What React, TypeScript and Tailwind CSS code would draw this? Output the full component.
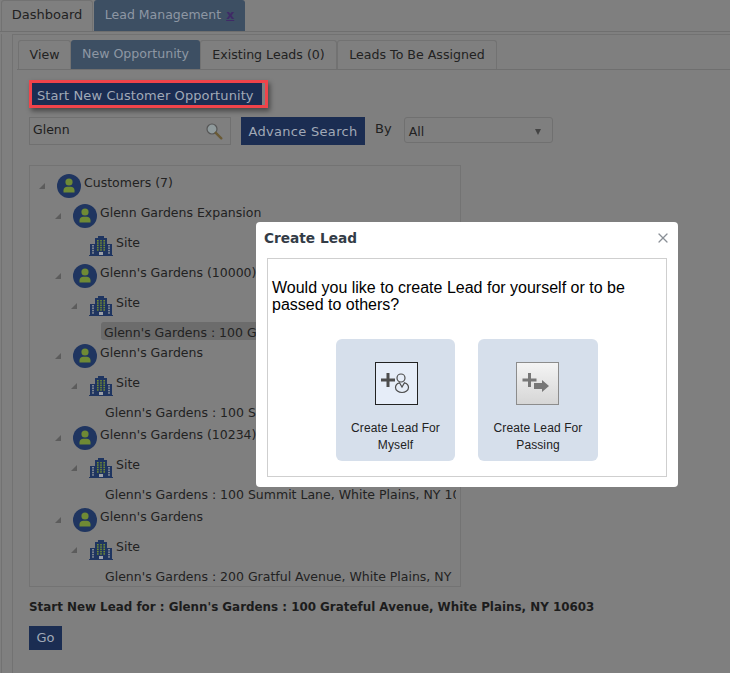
import { X } from "lucide-react";

type TreeRow = {
  level: number;
  kind: "person" | "site" | "address";
  label: string;
  arrow?: boolean;
  selected?: boolean;
  height?: string;
};

const treeRows: TreeRow[] = [
  { level: 0, kind: "person", label: "Customers (7)", arrow: true },
  { level: 1, kind: "person", label: "Glenn Gardens Expansion", arrow: true },
  { level: 2, kind: "site", label: "Site" },
  { level: 1, kind: "person", label: "Glenn's Gardens (10000)", arrow: true },
  { level: 2, kind: "site", label: "Site", arrow: true },
  { level: 3, kind: "address", label: "Glenn's Gardens : 100 Grateful Avenue, White Plains, NY 10603", selected: true, height: "h-[20px]" },
  { level: 1, kind: "person", label: "Glenn's Gardens", arrow: true },
  { level: 2, kind: "site", label: "Site", arrow: true },
  { level: 3, kind: "address", label: "Glenn's Gardens : 100 Summit Lane, White Plains, NY 10603", height: "h-[22px]" },
  { level: 1, kind: "person", label: "Glenn's Gardens (10234)", arrow: true },
  { level: 2, kind: "site", label: "Site", arrow: true },
  { level: 3, kind: "address", label: "Glenn's Gardens : 100 Summit Lane, White Plains, NY 10603", height: "h-[22px]" },
  { level: 1, kind: "person", label: "Glenn's Gardens", arrow: true },
  { level: 2, kind: "site", label: "Site", arrow: true },
  { level: 3, kind: "address", label: "Glenn's Gardens : 200 Gratful Avenue, White Plains, NY 10603", height: "h-[22px]" },
];

function PersonIcon() {
  return (
    <svg width="24" height="24" viewBox="0 0 24 24" className="shrink-0">
      <circle cx="12" cy="12" r="12" fill="#1f3560" />
      <circle cx="12" cy="8" r="3.6" fill="#6f8a35" />
      <path d="M6.500 18.500v-2.200c0-2.200 1.700-3.600 3.600-3.600h3.800c1.900 0 3.600 1.400 3.600 3.600v2.200z" fill="#6f8a35" />
    </svg>
  );
}

function SiteIcon() {
  const side = [0, 1, 2, 3];
  return (
    <svg width="24" height="20" viewBox="0 0 24 20" className="shrink-0">
      <path d="M0 20v-1h1V8h5V2h3V0h6v2h3v6h5v11h1v1z" fill="#1f3560" />
      {side.map((i) => (
        <g key={i} fill="#7d8590">
          <rect x="3" y={9 + i * 2.4} width="2" height="1.5" />
          <rect x="19" y={9 + i * 2.4} width="2" height="1.5" />
        </g>
      ))}
      {[0, 1, 2, 3, 4].map((i) => (
        <g key={i} fill="#6f8a35">
          <rect x="8" y={4 + i * 2.3} width="1.6" height="1.5" />
          <rect x="11.2" y={4 + i * 2.3} width="1.6" height="1.5" />
          <rect x="14.4" y={4 + i * 2.3} width="1.6" height="1.5" />
        </g>
      ))}
      <rect x="10" y="16" width="4" height="3" fill="#9a9ea6" />
    </svg>
  );
}

function TreeArrow() {
  return (
    <svg width="6" height="6" viewBox="0 0 6 6" className="absolute top-[15px] -left-[18px]">
      <path d="M6 0v6H0z" fill="#5c5c5c" />
    </svg>
  );
}

function TreeLine({ row }: { row: TreeRow }) {
  if (row.kind === "address") {
    return (
      <div className={`${row.height} flex items-start pl-[71px]`}>
        <span
          className={`mt-[4px] h-[18px] whitespace-nowrap rounded-[3px] pr-[3px] leading-[21px] ${
            row.selected ? "bg-[#6c6c6c] pl-[3px]" : "pl-[4px]"
          }`}
        >
          {row.label}
        </span>
      </div>
    );
  }
  const indent = row.level === 0 ? "pl-[27px]" : row.level === 1 ? "pl-[43px]" : "pl-[59px]";
  return (
    <div className={`flex h-[30px] items-start ${indent}`}>
      <div className={`relative flex items-start gap-[3px] ${row.kind === "site" ? "pt-[8px]" : "pt-[6px]"}`}>
        {row.arrow && <TreeArrow />}
        {row.kind === "person" ? <PersonIcon /> : <SiteIcon />}
        <span className={`whitespace-nowrap leading-[17px] ${row.kind === "site" ? "-mt-[2px]" : ""}`}>{row.label}</span>
      </div>
    </div>
  );
}

function MyselfIcon() {
  return (
    <div className="ml-[2px] h-[43px] w-[43px] border border-[#222] bg-[#e6edf8]">
      <svg width="41" height="41" viewBox="0 0 41 41" fill="none">
        <path d="M5 17h14M12 10v14" stroke="#4d4d4d" strokeWidth="3" />
        <circle cx="25" cy="15" r="4" stroke="#4d4d4d" strokeWidth="1.200" />
        <path d="M23.500 19.800c-2.800.7-4 2.700-4 4.700 0 2.800 3 5 6.500 5s6.500-2.200 6.500-5c0-2-1.200-4-4-4.700L26 24z" stroke="#4d4d4d" strokeWidth="1.200" />
      </svg>
    </div>
  );
}

function PassingIcon() {
  return (
    <div className="mr-[2px] h-[43px] w-[43px] border border-[#8c8c8c] bg-gradient-to-b from-[#f4f4f4] to-[#d6d6d6]">
      <svg width="41" height="41" viewBox="0 0 41 41" fill="none">
        <path d="M5.500 17h14M12.500 10v14" stroke="#777" strokeWidth="3" />
        <path d="M17 20h8v-3l7 6-7 6v-3h-8z" fill="#777" />
      </svg>
    </div>
  );
}

function SearchIcon() {
  return (
    <svg width="18" height="18" viewBox="0 0 18 18" fill="none">
      <circle cx="7" cy="7" r="5" fill="#8f9a9c" stroke="#565656" strokeWidth="1.200" />
      <path d="M10.800 10.800l5.500 5.500" stroke="#6a5a35" strokeWidth="2.400" strokeLinecap="round" />
    </svg>
  );
}

export default function App() {
  return (
    <div className="relative h-[673px] w-[730px] overflow-hidden bg-[#7f7f7f] font-['DejaVu_Sans',sans-serif] text-[12.5px] text-[#222]">
      {/* Top tabs */}
      <div className="flex h-[32px] items-end gap-px border-b border-[#6f6f6f] pl-px">
        <div className="flex h-[31px] w-[92px] items-center justify-center rounded-t-[3px] border border-b-0 border-[#727272] pb-[2px] text-[13px]">
          Dashboard
        </div>
        <div className="flex h-[31px] w-[151px] items-center justify-center gap-[5px] rounded-t-[3px] bg-[#3d4f63] pb-px text-[#8e97a3]">
          Lead Management
          <span className="font-bold text-[#3f2a66] underline">x</span>
        </div>
      </div>

      <div className="ml-px h-[641px] border-l border-[#727272] pl-[10px]">
        <div className="mt-[2px] h-[639px] border-t border-l border-[#727272] pt-[5px] pl-[4px]">
          {/* Inner tabs */}
          <div className="flex h-[30px] items-end border-b border-[#6f6f6f] pl-px text-[12.600px]">
            <div className="flex h-[29px] w-[53px] items-center justify-center rounded-t-[3px] border border-b-0 border-[#727272]">
              View
            </div>
            <div className="flex h-[29px] w-[129px] items-center justify-center rounded-t-[3px] bg-[#3d4f63] text-[#8e97a3]">
              New Opportunity
            </div>
            <div className="flex h-[29px] w-[137px] items-center justify-center rounded-t-[3px] border border-b-0 border-[#727272]">
              Existing Leads (0)
            </div>
            <div className="flex h-[29px] w-[160px] items-center justify-center rounded-t-[3px] border border-b-0 border-[#727272]">
              Leads To Be Assigned
            </div>
          </div>

          <div className="pl-[12px]">
            <div className="mt-[10px] h-[28px] w-[239px] border-[3px] border-[#f0434a] bg-[#7f7f7f] shadow-[2px_3px_5px_rgba(0,0,0,0.45)]">
              <div className="flex h-[22px] w-[230px] items-center bg-[#1b2d52] pt-[3px] pl-[5px] text-[13px] tracking-[0.1px] text-[#a1a9b7]">
                Start New Customer Opportunity
              </div>
            </div>

            <div className="mt-[9px] flex h-[28px] items-start">
              <div className="flex h-[28px] w-[202px] items-center justify-between border border-[#707070] pr-[7px] pb-px pl-[3px] text-[#1d1d1d]">
                Glenn
                <SearchIcon />
              </div>
              <button className="ml-[10px] h-[28px] w-[124px] bg-[#1b2d52] pt-px text-[13px] tracking-[0.3px] text-[#a1a9b7]">
                Advance Search
              </button>
              <span className="ml-[10px] pt-[3px] text-[13px] leading-[17px]">By</span>
              <div className="ml-[12px] flex h-[26px] w-[149px] items-center justify-between rounded-[3px] border border-[#707070] pt-[4px] pr-[11px] pl-[4px]">
                All
                <span className="h-0 w-0 border-x-[3.500px] border-t-[6px] border-x-transparent border-t-[#444]" />
              </div>
            </div>

            {/* Tree */}
            <div className="mt-[20px] h-[422px] w-[432px] border border-[#737373] pt-[2px]">
              <div className="h-[418px] w-[426px] overflow-hidden">
                {treeRows.map((row, i) => (
                  <TreeLine key={i} row={row} />
                ))}
              </div>
            </div>

            <p className="mt-[12px] text-[11.900px] leading-[17px] font-bold text-[#1c1c1c]">
              Start New Lead for : Glenn's Gardens : 100 Grateful Avenue, White Plains, NY 10603
            </p>
            <button className="mt-[10px] h-[24px] w-[33px] bg-[#1b2d52] text-[13px] text-[#a1a9b7]">Go</button>
          </div>
        </div>
      </div>

      {/* Create Lead dialog */}
      <div className="absolute top-[222px] left-[256px] h-[265px] w-[422px] rounded-[4px] bg-white px-[11px]">
        <div className="flex h-[36px] items-center justify-between">
          <h2 className="-ml-[3px] pb-[4px] text-[13.700px] font-bold text-[#333c47]">Create Lead</h2>
          <X size={16} strokeWidth={1.800} className="-mr-[4px] mb-[5px] text-[#8a8f96]" />
        </div>
        <div className="h-[219px] border border-[#cfcfcf] px-[4px] pt-[20px] font-['Liberation_Sans',sans-serif] text-black">
          <p className="text-[16px] leading-[17px]">
            Would you like to create Lead for yourself or to be passed to others?
          </p>
          <div className="mt-[26px] ml-[64px] flex gap-[23px] text-[12px] leading-[17px] tracking-[0.1px] text-[#222]">
            <div className="flex h-[122px] w-[119px] flex-col items-center rounded-[6px] bg-[#d6dfeb] pt-[23px]">
              <MyselfIcon />
              <span className="mt-[15px] w-[100px] text-center">Create Lead For Myself</span>
            </div>
            <div className="flex h-[122px] w-[120px] flex-col items-center rounded-[6px] bg-[#d6dfeb] pt-[23px]">
              <PassingIcon />
              <span className="mt-[15px] w-[100px] text-center">Create Lead For Passing</span>
            </div>
          </div>
        </div>
      </div>
    </div>
  );
}
